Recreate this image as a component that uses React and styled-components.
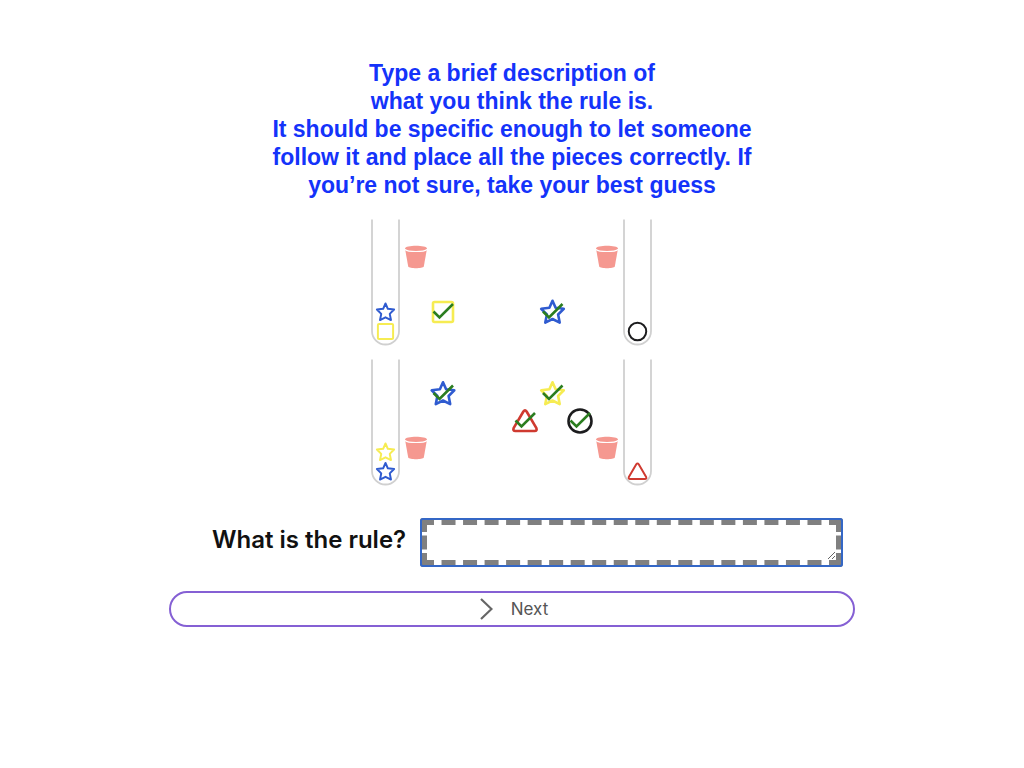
import React, { useState } from 'react';
import styled, { createGlobalStyle } from 'styled-components';

const GlobalStyle = createGlobalStyle`
  * { box-sizing: border-box; }
  body { margin: 0; background: #fff; }
`;

const Page = styled.main`
  display: flex;
  flex-direction: column;
  align-items: center;
  padding: 59px 16px 32px;
  font-family: Inter, "Liberation Sans", sans-serif;
`;

const Instructions = styled.h1`
  margin: 0;
  color: #1433fa;
  font: bold 23px/28px "Liberation Sans", Arial, sans-serif;
  text-align: center;
`;

const Board = styled.svg`
  display: block;
  width: 288px;
  height: 272px;
  margin-top: 17px;
  fill: none;
  stroke-linecap: round;
  stroke-linejoin: round;
`;

const Form = styled.form`
  display: flex;
  flex-direction: column;
  width: 67vw;
  min-width: 460px;
  margin-top: 30px;
  gap: 24px;
`;

const Field = styled.div`
  display: flex;
  align-items: center;
  padding: 0 12px 0 43px;
  gap: 14px;
`;

const Label = styled.label`
  flex: none;
  padding-bottom: 6px;
  color: #111;
  font-size: 24px;
  font-weight: 600;
  line-height: 32px;
`;

const RuleInput = styled.textarea`
  flex: 1;
  min-width: 0;
  height: 49px;
  padding: 2px 6px;
  border: 7px dashed #808080;
  border-radius: 3px;
  outline: 2px solid #3467c6;
  outline-offset: -2px;
  background: #fff;
  font: 16px/24px Inter, sans-serif;
`;

const NextButton = styled.button`
  display: flex;
  align-items: center;
  justify-content: center;
  gap: 18px;
  height: 36px;
  padding: 0 0 0 4px;
  border: 2px solid #8560d4;
  border-radius: 18px;
  background: #fff;
  color: #555;
  font: 17px/24px Inter, sans-serif;
  cursor: pointer;
`;

const Chevron = styled.svg`
  width: 13px;
  height: 22px;
  fill: none;
  stroke: #666;
  stroke-width: 2.2;
`;

const COLORS = { blue: '#2f5bd0', yellow: '#f6ec52', red: '#cf3a30', black: '#1c1c1e' };

const SHAPES = {
  star: <path d="M0-11.2 3.1-4.2 11.3-3.2 5.6 2.5 7.2 10.6 0 7-7.2 10.6-5.6 2.5-11.3-3.2-3.1-4.2Z" />,
  square: <rect x="-10" y="-10" width="20" height="20" rx="1.5" />,
  circle: <circle r="11.5" />,
  triangle: <path d="M-1.6-9.5Q0-11.8 1.6-9.5L11.4 7.2Q12.4 10 9.6 10H-9.6Q-12.4 10-11.4 7.2Z" />,
};

function Piece({ shape, color, x, y, small }) {
  const scale = small ? 0.76 : 1;
  return (
    <g transform={`translate(${x} ${y})`}>
      <g transform={`scale(${scale})`} stroke={COLORS[color]} strokeWidth={small ? 2.6 : 2.6}>
        {SHAPES[shape]}
      </g>
      {!small && (
        <path d="M-9.5-.5-3.5 5.5 10-8" stroke="#2b7d20" strokeWidth="2.6" strokeLinecap="butt" strokeLinejoin="miter" />
      )}
    </g>
  );
}

function Tube({ x, y }) {
  return (
    <path
      transform={`translate(${x} ${y})`}
      d="M0 0V111.5A13.5 13.5 0 0 0 27 111.5V0"
      stroke="#d0d0d0"
      strokeWidth="1.8"
      strokeLinecap="butt"
    />
  );
}

function Bucket({ x, y }) {
  return (
    <g transform={`translate(${x} ${y})`} fill="#f59890">
      <path d="M-11-8.5C-11-12.2 11-12.2 11-8.5L7.8 9.5C6.5 11.8-6.5 11.8-7.8 9.5Z" />
      <path d="M-11-7.5C-8-4.8 8-4.8 11-7.5" fill="none" stroke="#fff" strokeWidth="1.1" />
    </g>
  );
}

function GameBoard() {
  return (
    <Board viewBox="0 0 288 272" role="img" aria-label="Pieces and buckets">
      <Tube x={4} y={3.5} />
      <Tube x={256} y={3.5} />
      <Tube x={4} y={143.5} />
      <Tube x={256} y={143.5} />
      <Bucket x={48} y={41} />
      <Bucket x={239} y={41} />
      <Bucket x={48} y={232} />
      <Bucket x={239} y={232} />
      <Piece shape="star" color="blue" x={17.5} y={96} small />
      <Piece shape="square" color="yellow" x={17.5} y={115.5} small />
      <Piece shape="circle" color="black" x={269.5} y={115.5} small />
      <Piece shape="star" color="yellow" x={17.5} y={236} small />
      <Piece shape="star" color="blue" x={17.5} y={255.5} small />
      <Piece shape="triangle" color="red" x={269.5} y={255.5} small />
      <Piece shape="square" color="yellow" x={75} y={96} />
      <Piece shape="star" color="blue" x={184.5} y={96} />
      <Piece shape="star" color="blue" x={75} y={177.5} />
      <Piece shape="star" color="yellow" x={184.5} y={177.5} />
      <Piece shape="triangle" color="red" x={157} y={205} />
      <Piece shape="circle" color="black" x={212} y={205} />
    </Board>
  );
}

export default function App() {
  const [rule, setRule] = useState('');
  return (
    <>
      <GlobalStyle />
      <Page>
        <Instructions>
          Type a brief description of<br />
          what you think the rule is.<br />
          It should be specific enough to let someone<br />
          follow it and place all the pieces correctly. If<br />
          you’re not sure, take your best guess
        </Instructions>
        <GameBoard />
        <Form onSubmit={(event) => event.preventDefault()}>
          <Field>
            <Label htmlFor="rule">What is the rule?</Label>
            <RuleInput id="rule" value={rule} onChange={(event) => setRule(event.target.value)} />
          </Field>
          <NextButton type="submit">
            <Chevron viewBox="0 0 13 22" aria-hidden="true">
              <path d="M1 1 11.5 11 1 21" />
            </Chevron>
            Next
          </NextButton>
        </Form>
      </Page>
    </>
  );
}
